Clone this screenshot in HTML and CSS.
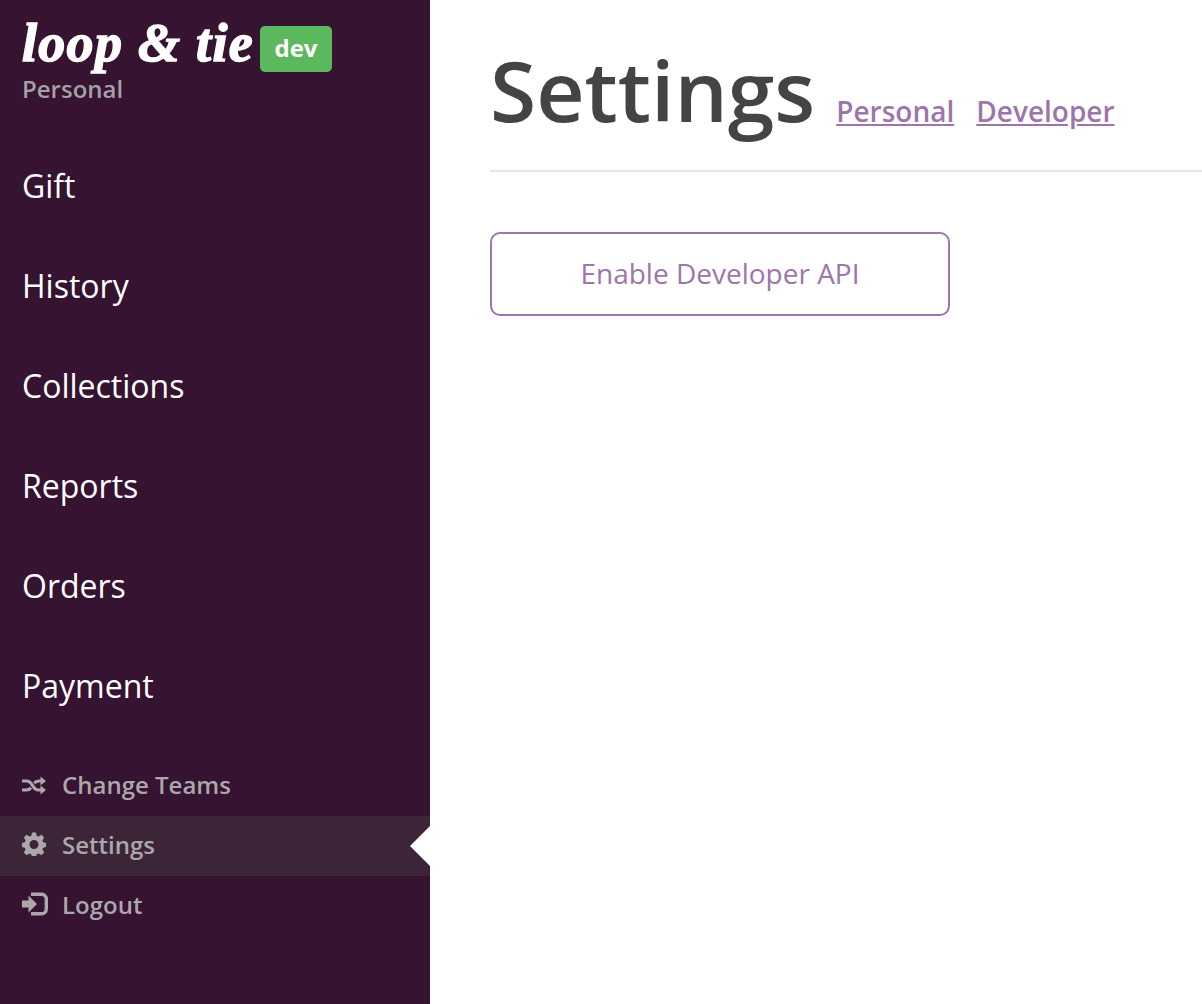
FILE: index.html
```html
<!DOCTYPE html>
<html lang="en">
<head>
<meta charset="utf-8">
<title>Settings</title>
<link rel="stylesheet" href="styles.css">
</head>
<body>
<div class="app">
  <aside class="sidebar">
    <header class="brand">
      <div class="brand-row">
        <span class="logo">loop &amp; tie</span>
        <span class="badge">dev</span>
      </div>
      <div class="team">Personal</div>
    </header>
    <nav class="primary">
      <a class="primary-item">Gift</a>
      <a class="primary-item">History</a>
      <a class="primary-item">Collections</a>
      <a class="primary-item">Reports</a>
      <a class="primary-item">Orders</a>
      <a class="primary-item">Payment</a>
    </nav>
    <nav class="secondary">
      <a class="secondary-item">
        <svg class="icon" viewBox="0 0 24 24" fill="none" stroke="currentColor"><path d="M0 9h4.500c3 0 4.500 1.800 6 4.500s3 4.500 6 4.500h3M0 18h4.500c2 0 3.300-.8 4.400-2.300M12.200 11.300c1.200-1.500 2.500-2.300 4.300-2.300h3" stroke-width="3.200"/><path d="M18.500 4.500 24 9 18.500 13.500zM18.500 13.500 24 18 18.500 22.500z" fill="currentColor" stroke="none"/></svg>
        <span>Change Teams</span>
      </a>
      <a class="secondary-item is-active">
        <svg class="icon" viewBox="0 0 24 24"><path fill="currentColor" fill-rule="evenodd" d="M10 .5h4l.7 3.300 1.900.8 2.800-1.800 2.800 2.800-1.800 2.800.8 1.900 3.300.7v4l-3.300.7-.8 1.900 1.800 2.800-2.800 2.800-2.800-1.800-1.900.8-.7 3.300h-4l-.7-3.300-1.900-.8-2.800 1.800-2.800-2.800 1.800-2.800-.8-1.900-3.300-.7v-4l3.300-.7.800-1.900-1.800-2.800 2.800-2.800 2.800 1.800 1.900-.8zM12 8a4.500 4.500 0 1 0 0 9 4.500 4.500 0 0 0 0-9z"/></svg>
        <span>Settings</span>
        <span class="pointer"></span>
      </a>
      <a class="secondary-item">
        <svg class="icon icon-wide" viewBox="0 0 26 24"><path fill="currentColor" d="M0 8.500h6.500V3.500l8.500 8.500-8.500 8.500v-5H0z"/><path fill="none" stroke="currentColor" stroke-width="3.400" d="M9 2.200h10.500c2.700 0 4.800 2.100 4.800 4.800v10c0 2.700-2.100 4.800-4.800 4.800H9"/></svg>
        <span>Logout</span>
      </a>
    </nav>
  </aside>
  <main class="content">
    <header class="page-head">
      <h1 class="title">Settings</h1>
      <a class="tab">Personal</a>
      <a class="tab">Developer</a>
    </header>
    <button class="action" type="button"><span class="action-label">Enable Developer API</span></button>
  </main>
</div>
</body>
</html>
```
FILE: styles.css
```css
* { box-sizing: border-box; }
html, body { margin: 0; height: 100%; overflow: hidden; background: #fff; }
body { font-family: "Open Sans", "Liberation Sans", sans-serif; }
.app { display: flex; height: 1004px; }

.sidebar { width: 430px; flex: none; background: #351331; color: #fff; }
.brand { height: 136px; padding: 15px 0 0 22px; }
.brand-row { display: flex; align-items: flex-start; height: 59px; }
.logo { font-family: "Liberation Serif", serif; font-weight: 700; font-style: italic; font-size: 54px; line-height: 56px; letter-spacing: 1.3px; color: #fff; -webkit-text-stroke: 1.5px #fff; white-space: nowrap; width: 238px; }
.badge { margin-top: 11px; width: 72px; height: 46px; border-radius: 5px; background: #5cb85c; color: #fff; font-size: 24px; font-weight: 700; line-height: 43px; text-align: center; }
.team { margin-top: -1px; font-size: 24px; font-weight: 600; line-height: 32px; color: #a5a0a4; }

.primary-item { display: block; height: 100px; padding-left: 22px; font-size: 32px; line-height: 100px; color: #fff; }

.secondary { margin-top: 20px; }
.secondary-item { position: relative; display: flex; align-items: center; height: 60px; padding: 0 0 4px 22px; font-size: 24px; font-weight: 600; color: #aca7ab; }
.secondary-item.is-active { background: #3c2439; }
.icon { width: 24px; height: 24px; flex: none; margin-right: 16px; }
.icon-wide { width: 26px; margin-right: 14px; }
.pointer { position: absolute; right: 0; top: 10px; width: 0; height: 0; border-style: solid; border-width: 20px 20px 20px 0; border-color: transparent #fff transparent transparent; }

.content { flex: 1; min-width: 0; padding-left: 60px; }
.page-head { display: flex; align-items: baseline; gap: 22px; height: 172px; padding-top: 40px; border-bottom: 2px solid #e7e7e7; }
.title { margin: 0 -1px 0 0; font-size: 84px; line-height: 100px; font-weight: 600; color: #444; }
.tab { font-size: 28px; font-weight: 600; color: #9e75ab; text-decoration: underline; }
.action { display: block; width: 460px; height: 84px; margin-top: 60px; padding: 0 0 2px; border: 2px solid #9e75ab; border-radius: 10px; background: #fff; color: #9e75ab; font-family: inherit; font-size: 28px; }
```
